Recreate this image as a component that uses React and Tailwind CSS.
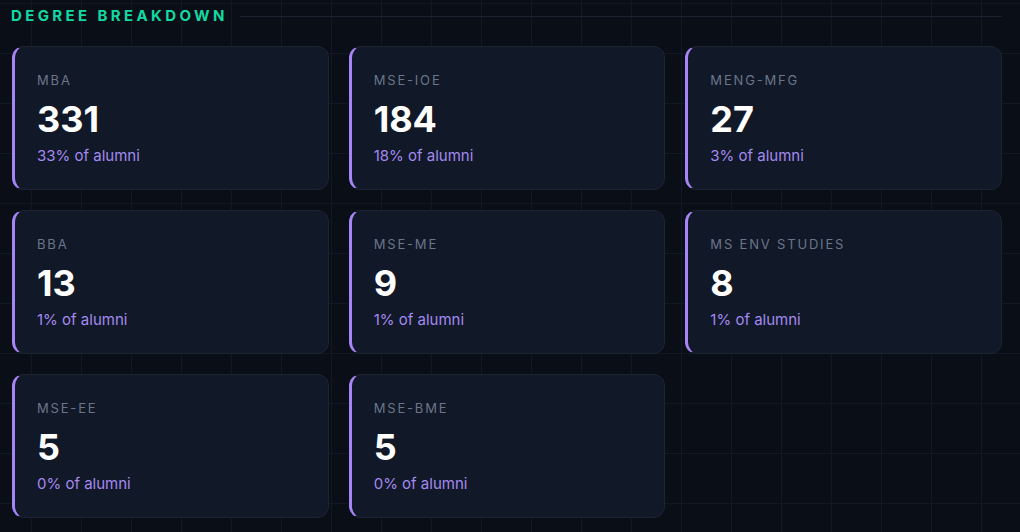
import React from 'react';

const degrees = [
  { name: 'MBA', count: 331, pct: 33 },
  { name: 'MSE-IOE', count: 184, pct: 18 },
  { name: 'MENG-MFG', count: 27, pct: 3 },
  { name: 'BBA', count: 13, pct: 1 },
  { name: 'MSE-ME', count: 9, pct: 1 },
  { name: 'MS ENV STUDIES', count: 8, pct: 1 },
  { name: 'MSE-EE', count: 5, pct: 0 },
  { name: 'MSE-BME', count: 5, pct: 0 },
];

function DegreeCard({ name, count, pct }) {
  return (
    <div className="h-[144px] rounded-xl border border-[#1c2433] border-l-[3px] border-l-[#a585f7] bg-[#111827] pl-[22px] pt-[23px]">
      <div className="text-[13px] leading-5 tracking-[0.14em] text-[#6b7589]">{name}</div>
      <div className="mt-[9px] text-[36px] leading-10 font-bold text-white">{count}</div>
      <div className="mt-[6px] text-[15px] leading-[22px] text-[#a48af0]">{pct}% of alumni</div>
    </div>
  );
}

export default function App() {
  return (
    <div
      className="min-h-screen bg-[#0a0e17] bg-[linear-gradient(to_right,#121824_1px,transparent_1px),linear-gradient(to_bottom,#121824_1px,transparent_1px)] bg-[size:50px_50px] bg-[position:31px_3px] pl-3 pr-[18px] pt-[6px] pb-4"
      style={{ fontFamily: 'Inter, "Liberation Sans", sans-serif' }}
    >
      <div className="flex items-center gap-3">
        <h2 className="text-[15px] leading-5 font-bold tracking-[0.225em] text-[#12d9a2] -ml-px">DEGREE BREAKDOWN</h2>
        <div className="h-px flex-1 bg-[#1b2230]" />
      </div>
      <div className="mt-5 grid grid-cols-3 gap-5">
        {degrees.map((d) => (
          <DegreeCard key={d.name} {...d} />
        ))}
      </div>
    </div>
  );
}
